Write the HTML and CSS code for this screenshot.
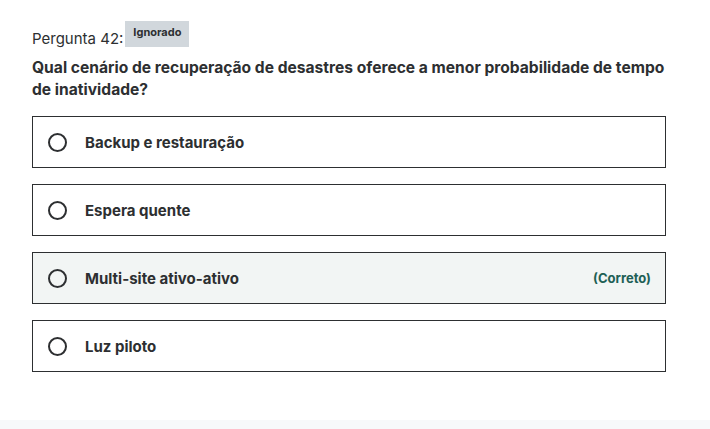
FILE: index.html
```html
<!DOCTYPE html>
<html lang="pt">
<head>
<meta charset="utf-8">
<link rel="stylesheet" href="styles.css">
</head>
<body>
<main class="page">
  <section class="question">
    <div class="header">
      <span class="label">Pergunta 42:</span>
      <span class="badge">Ignorado</span>
    </div>
    <h2 class="prompt">Qual cenário de recuperação de desastres oferece a menor probabilidade de tempo de inatividade?</h2>
    <ul class="options">
      <li class="option"><span class="radio"></span><span class="text">Backup e restauração</span></li>
      <li class="option"><span class="radio"></span><span class="text">Espera quente</span></li>
      <li class="option correct"><span class="radio"></span><span class="text">Multi-site ativo-ativo</span><span class="tag">(Correto)</span></li>
      <li class="option"><span class="radio"></span><span class="text">Luz piloto</span></li>
    </ul>
  </section>
  <div class="footer"></div>
</main>
</body>
</html>
```

FILE: styles.css
```css
* { box-sizing: border-box; }
html, body { margin: 0; padding: 0; background: #fff; }
body {
  font-family: Inter, "Noto Sans", sans-serif;
  color: #2d2f31;
  width: 710px;
  height: 429px;
  overflow: hidden;
}
.page {
  display: flex;
  flex-direction: column;
  height: 429px;
}
.question {
  padding: 21px 44px 0 32px;
  flex: 1;
}
.header {
  display: flex;
  align-items: flex-start;
  height: 26px;
}
.label {
  font-size: 15px;
  line-height: 16px;
  margin-top: 10px;
  margin-right: 2px;
  color: #2d2f31;
}
.badge {
  background: #d1d7dc;
  font-size: 11px;
  font-weight: 700;
  line-height: 14px;
  padding: 4px 8px 8px 8px;
  height: 26px;
}
.prompt {
  margin: 10px 0 0 0;
  font-size: 15.6px;
  font-weight: 700;
  line-height: 22px;
  color: #2d2f31;
}
.options {
  list-style: none;
  margin: 15px 0 0 0;
  padding: 0;
  display: flex;
  flex-direction: column;
  gap: 16px;
}
.option {
  display: flex;
  align-items: center;
  height: 52px;
  border: 1px solid #2d2f31;
  padding: 0 14px 0 15px;
}
.option.correct { background: #f2f5f4; }
.radio {
  width: 19px;
  height: 19px;
  border: 2px solid #2d2f31;
  border-radius: 50%;
  flex: none;
  margin-right: 18px;
}
.text {
  font-size: 15px;
  font-weight: 700;
  flex: 1;
}
.tag {
  font-size: 13px;
  font-weight: 700;
  color: #1e6055;
}
.footer {
  height: 9px;
  background: #f7f9fa;
}
```
